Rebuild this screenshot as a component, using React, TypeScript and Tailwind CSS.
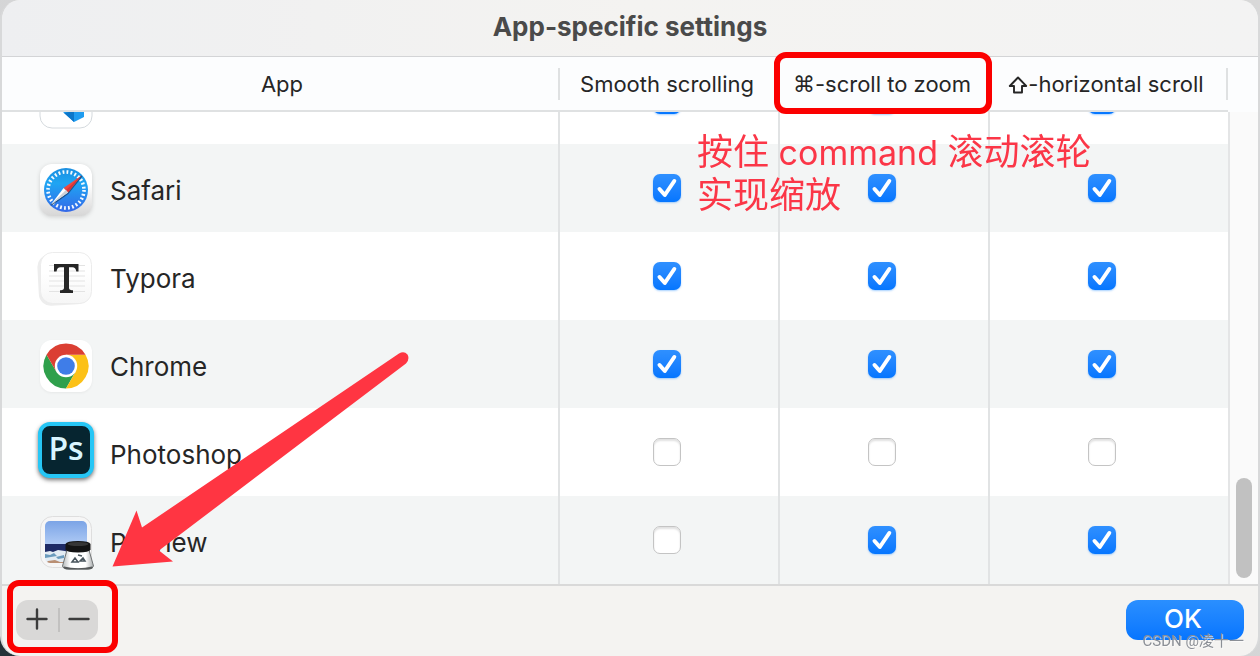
import { useLayoutEffect, useRef, useState } from "react"
import type { ReactNode } from "react"

type Settings = [boolean, boolean, boolean]

interface AppRow {
  name: string
  icon: ReactNode
  settings: Settings
}

function CodeIcon() {
  return (
    <svg viewBox="0 0 60 60" className="size-15" aria-hidden="true">
      <rect x="4" y="4" width="52" height="52" rx="12" fill="#fff" stroke="#d5dade" />
      <path d="M38 10l10 5v30l-10 5-22-20 4-4 18 13z" fill="#1f9cf0" />
      <path d="M28 41l10 9V39z" fill="#0b76c9" />
    </svg>
  )
}

function SafariIcon() {
  return (
    <svg viewBox="0 0 60 60" className="size-15 drop-shadow-sm" aria-hidden="true">
      <defs>
        <linearGradient id="safari-tile" x2="0" y2="1">
          <stop offset="0.4" stopColor="#fff" />
          <stop offset="1" stopColor="#d6d6d6" />
        </linearGradient>
        <linearGradient id="safari-dial" x2="0" y2="1">
          <stop stopColor="#1c8fe0" />
          <stop offset="0.35" stopColor="#1fa5f3" />
          <stop offset="1" stopColor="#3468e8" />
        </linearGradient>
      </defs>
      <rect x="4" y="4" width="52" height="52" rx="12" fill="url(#safari-tile)" />
      <circle cx="30" cy="30" r="22" fill="url(#safari-dial)" />
      <circle
        cx="30"
        cy="30"
        r="18"
        fill="none"
        stroke="#fff"
        strokeWidth="3.6"
        strokeDasharray="1.8 2.239"
        opacity="0.95"
      />
      <path d="M15 45L31.8 33.4 45.8 16" fill="none" stroke="#123f6c" strokeWidth="1.6" opacity="0.7" />
      <path d="M45.5 15.5L32 32.4 27.6 28z" fill="#f0473f" />
      <path d="M45.5 15.5L32 32.4 30 30z" fill="#d3363a" />
      <path d="M15 44.5L27.6 28 32 32.4z" fill="#fff" />
      <path d="M15 44.5L30 30l2 2.4z" fill="#ccd1d8" />
    </svg>
  )
}

function TyporaIcon() {
  return (
    <svg viewBox="0 0 60 60" className="size-15" aria-hidden="true">
      <defs>
        <linearGradient id="typora-tile" x2="0" y2="1">
          <stop offset="0.4" stopColor="#fff" />
          <stop offset="1" stopColor="#f6f6f6" />
        </linearGradient>
      </defs>
      <rect x="2" y="6" width="50" height="51" rx="12" fill="#ededed" transform="rotate(-3 28 30)" />
      <rect x="4.5" y="4.5" width="51" height="51" rx="12" fill="url(#typora-tile)" stroke="#ececec" />
      <path d="M13 17.500h36M13 23h36M13 28h36M13 33h36M13 38h36M13 43.500h36" stroke="#e3e3e3" strokeWidth="1.2" />
      <path
        d="M18 16h24.500v7.500h-2.200c-.5-3-1.600-4.200-4-4.200H33V39c0 2.600.5 3 4 3.300V45H24v-2.700c3.500-.3 4-.7 4-3.300V19.300h-3.500c-2.400 0-3.400 1.200-4 4.200H18z"
        fill="#262626"
      />
    </svg>
  )
}

function ChromeIcon() {
  return (
    <svg viewBox="0 0 60 60" className="size-15 drop-shadow-xs" aria-hidden="true">
      <rect x="4" y="4" width="52" height="52" rx="12" fill="#fff" />
      <path d="M10.500 18.750A22.500 22.500 0 0 0 30 52.500L39.700 35.600 30 30 20.300 35.600z" fill="#2fa04c" />
      <path d="M49.500 18.750A22.500 22.500 0 0 1 30 52.500L39.700 35.600 30 18.750z" fill="#fcc117" />
      <path d="M10.500 18.750A22.500 22.500 0 0 1 49.500 18.750H30L20.300 35.600z" fill="#db3f33" />
      <circle cx="30" cy="30" r="11.2" fill="#fff" />
      <circle cx="30" cy="30" r="8.8" fill="#3f7de8" />
    </svg>
  )
}

function PhotoshopIcon() {
  return (
    <span className="flex size-15 items-center justify-center pb-2" aria-hidden="true">
      <span className="flex h-14 w-14 shrink-0 items-center justify-center rounded-xl border-4 border-[#26c6f5] bg-[#062530] pb-1 font-['Open_Sans',sans-serif] text-[32px] font-semibold text-[#d9f5ff] shadow-[0_2px_4px_rgba(0,0,0,0.55)]">
        Ps
      </span>
    </span>
  )
}

function PreviewIcon() {
  return (
    <svg viewBox="0 0 60 60" className="size-15" aria-hidden="true">
      <defs>
        <linearGradient id="preview-sky" x2="0" y2="1">
          <stop stopColor="#7ba4e6" />
          <stop offset="1" stopColor="#b0cbf5" />
        </linearGradient>
        <linearGradient id="preview-glass">
          <stop stopColor="#b5b9ba" />
          <stop offset="0.25" stopColor="#fff" />
          <stop offset="0.75" stopColor="#fff" />
          <stop offset="1" stopColor="#a9adae" />
        </linearGradient>
        <clipPath id="preview-photo">
          <rect x="9" y="9" width="42" height="42" rx="5" />
        </clipPath>
      </defs>
      <rect x="4.500" y="4.500" width="51" height="51" rx="12" fill="#f6f6f6" stroke="#dedede" />
      <g clipPath="url(#preview-photo)">
        <path d="M9 9h42v24H9z" fill="url(#preview-sky)" />
        <path d="M9 32h42v10H9z" fill="#1e2b66" />
        <path d="M9 40l5-1 3 1 5-2 7 1 4 2v11H9z" fill="#e3ecf4" />
        <path d="M9 42l5 1 4-2 3 3-6 1-6 1zM20 45l8-2v3l-6 1z" fill="#6b9bbd" />
        <path d="M12 49l7-1 5 2h6v2H9z" fill="#b98f73" />
      </g>
      <path d="M31 38h22l4.500 16q-1 3-5 3H33q-6 0-6.500-3z" fill="url(#preview-glass)" stroke="#707475" />
      <path d="M28 54.500q14 3.500 28 0l1 1.500q-2 1.500-6 1.500H33q-4 0-5.500-1.500z" fill="#56595a" />
      <path d="M36 50l3-4 3 4zM44 49l3-3 2 3zM42 43l4 1" fill="none" stroke="#48545c" strokeWidth="1.500" />
      <path d="M29.500 32q1-3 12.500-3t12.500 3v5.500q-1 3-12.500 3t-12.500-3z" fill="#141414" />
      <ellipse cx="42" cy="32" rx="10.500" ry="2" fill="#363636" />
    </svg>
  )
}

const apps: AppRow[] = [
  { name: "Code", icon: <CodeIcon />, settings: [true, true, true] },
  { name: "Safari", icon: <SafariIcon />, settings: [true, true, true] },
  { name: "Typora", icon: <TyporaIcon />, settings: [true, true, true] },
  { name: "Chrome", icon: <ChromeIcon />, settings: [true, true, true] },
  { name: "Photoshop", icon: <PhotoshopIcon />, settings: [false, false, false] },
  { name: "Preview", icon: <PreviewIcon />, settings: [false, true, true] },
]

const columns = ["Smooth scrolling", "Command-scroll to zoom", "Shift-horizontal scroll"]

interface CheckboxProps {
  label: string
  checked: boolean
  onChange: () => void
}

function Checkbox({ label, checked, onChange }: CheckboxProps) {
  return (
    <label className="inline-grid align-middle">
      <input
        type="checkbox"
        aria-label={label}
        checked={checked}
        onChange={onChange}
        className="peer col-start-1 row-start-1 size-7 appearance-none rounded-[7px] border border-[#c4c4c4] bg-white shadow-[inset_0_2px_2px_rgba(0,0,0,0.12)] checked:border-0 checked:bg-linear-to-b checked:from-[#2f90ff] checked:to-[#0476ff] checked:shadow-[0_1px_2px_rgba(0,122,255,0.35)]"
      />
      <svg
        viewBox="0 0 28 28"
        className="pointer-events-none invisible col-start-1 row-start-1 size-7 peer-checked:visible"
        aria-hidden="true"
      >
        <path
          d="M6.500 15L11.800 21 21.300 7"
          fill="none"
          stroke="#fff"
          strokeWidth="4"
          strokeLinecap="round"
          strokeLinejoin="round"
        />
      </svg>
    </label>
  )
}

function HeaderCell({ children }: { children: ReactNode }) {
  return (
    <th scope="col" className="border-b-2 border-[#dfe1e2] bg-[#fcfdfe] p-0 font-normal first:pl-2">
      <div className="flex h-8 items-center justify-center border-r-2 border-[#dfe1e2] pt-0.5 pr-1 whitespace-nowrap">
        {children}
      </div>
    </th>
  )
}

export default function App() {
  const scroller = useRef<HTMLDivElement>(null)
  const [rows, setRows] = useState(apps)

  useLayoutEffect(() => {
    if (scroller.current) scroller.current.scrollTop = scroller.current.scrollHeight
  }, [])

  const toggle = (row: number, col: number) => {
    setRows(
      rows.map((app, i) =>
        i === row ? { ...app, settings: app.settings.map((on, j) => (j === col ? !on : on)) as Settings } : app
      )
    )
  }

  return (
    <div className="relative h-screen overflow-hidden bg-linear-to-tr from-[#243238] from-2% via-[#d2d3d5] via-4% to-[#d8d8d8] font-[Inter,'Noto_Sans_CJK_SC',sans-serif] text-[#262626]">
      <div className="flex h-full flex-col overflow-hidden rounded-[20px] border-x-2 border-[#d8d9da] bg-[#f4f3f1]">
        <header className="flex h-[57px] shrink-0 items-center justify-center border-b border-[#d3d4d6] bg-linear-to-r from-[#eeeff1] via-[#f4f3f1] to-[#f3f3f3] pb-1">
          <h1 className="text-[26px] font-bold text-[#4a4a4a]">App-specific settings</h1>
        </header>

        <main className="flex min-h-0 flex-1">
          <div ref={scroller} className="min-w-0 flex-1 overflow-y-auto [scrollbar-width:none]">
            <table className="w-full table-fixed border-separate border-spacing-0">
              <colgroup>
                <col />
                <col className="w-[220px]" />
                <col className="w-[210px]" />
                <col className="w-[238px]" />
              </colgroup>
              <thead className="sticky top-0 z-10 text-[22px]">
                <tr className="h-[55px]">
                  <HeaderCell>App</HeaderCell>
                  <HeaderCell>Smooth scrolling</HeaderCell>
                  <HeaderCell>
                    <span className="font-['DejaVu_Sans']">⌘</span>-scroll to zoom
                  </HeaderCell>
                  <HeaderCell>
                    <svg viewBox="0 0 20 20" className="size-5" role="img" aria-label="Shift">
                      <path
                        d="M10 2.500L1.800 11H6v6.500h8V11h4.200z"
                        fill="none"
                        stroke="currentColor"
                        strokeWidth="1.900"
                        strokeLinejoin="round"
                      />
                    </svg>
                    -horizontal scroll
                  </HeaderCell>
                </tr>
              </thead>
              <tbody>
                {rows.map((app, row) => (
                  <tr key={app.name} className="h-22 odd:bg-white even:bg-[#f3f5f5]">
                    <th scope="row" className="border-r-2 border-[#e1e3e4] p-0 pt-1 pl-[34px] text-left font-normal">
                      <div className="flex items-center gap-[14px] text-[26px]">
                        {app.icon}
                        {app.name}
                      </div>
                    </th>
                    {app.settings.map((on, col) => (
                      <td
                        key={columns[col]}
                        className="border-r-2 border-[#e1e3e4] p-0 pr-1 text-center last:border-r-0 last:pr-3.5"
                      >
                        <Checkbox
                          label={`${app.name}: ${columns[col]}`}
                          checked={on}
                          onChange={() => toggle(row, col)}
                        />
                      </td>
                    ))}
                  </tr>
                ))}
              </tbody>
            </table>
          </div>

          <div className="flex w-[30px] shrink-0 flex-col bg-[#fcfdfe] pt-[55px]">
            <div className="flex flex-1 flex-col justify-end border-l-2 border-[#e4e5e6] bg-[#fafafa] px-1.5 pb-1.5">
              <div className="h-25 w-4 rounded-full bg-[#c1c1c1]"></div>
            </div>
          </div>
        </main>

        <footer className="flex shrink-0 items-start justify-between border-t-2 border-[#d9d9d9] px-3.5 pt-3.5 pb-4">
          <div className="flex h-10 items-center rounded-xl bg-[#d9d8d7] text-[#3c3c3c]">
            <button type="button" aria-label="Add app" className="flex h-full w-[42px] items-center justify-center pb-0.5">
              <svg viewBox="0 0 22 22" className="size-[22px]" stroke="currentColor" strokeWidth="2.4">
                <path d="M1.500 11h19M11 1.500v19" strokeLinecap="round" />
              </svg>
            </button>
            <span className="h-6 w-0.5 bg-[#c2c1c0]"></span>
            <button type="button" aria-label="Remove app" className="flex h-full w-[38px] items-center justify-center pb-0.5">
              <svg viewBox="0 0 22 22" className="size-[22px]" stroke="currentColor" strokeWidth="2.4">
                <path d="M1.500 11h19" strokeLinecap="round" />
              </svg>
            </button>
          </div>
          <button
            type="button"
            className="h-10 w-[118px] rounded-xl bg-linear-to-b from-[#2a8fff] to-[#0575ff] pr-1 pb-0.5 text-[26px] leading-9 font-medium text-white"
          >
            OK
          </button>
        </footer>
      </div>

      {/* Tutorial marks drawn over the dialog */}
      <div className="pointer-events-none absolute inset-0 z-20">
        <div className="absolute top-[52px] right-[268px] h-[62px] w-[218px] rounded-xl border-6 border-[#fb0000]"></div>
        <p className="absolute top-[131px] right-[171px] w-[392px] text-[36px] leading-[42px] whitespace-nowrap text-[#fb3647]">
          按住<span className="text-[34px]"> command </span>滚动滚轮
          <br />
          实现缩放
        </p>
        <svg viewBox="0 0 300 218" className="absolute bottom-[88px] left-[112px] h-[218px] w-[300px]" aria-hidden="true">
          <path
            d="M0.500 216.500L24.500 160.500 30 177.500 287 3.500Q292 0.500 295.500 4.500 298 9 294 13.500L47 200.500 61 211.500z"
            fill="#ff3542"
          />
        </svg>
        <div className="absolute bottom-[3px] left-[7px] h-[73px] w-[111px] rounded-xl border-6 border-[#fb0000]"></div>
        <p className="absolute right-4 bottom-1 font-[Roboto,'Noto_Sans_CJK_SC',sans-serif] text-[15px] text-[#8b8f96] [text-shadow:1px_1px_0_rgba(255,255,255,0.6)]">
          CSDN @凌十一
        </p>
      </div>
    </div>
  )
}
